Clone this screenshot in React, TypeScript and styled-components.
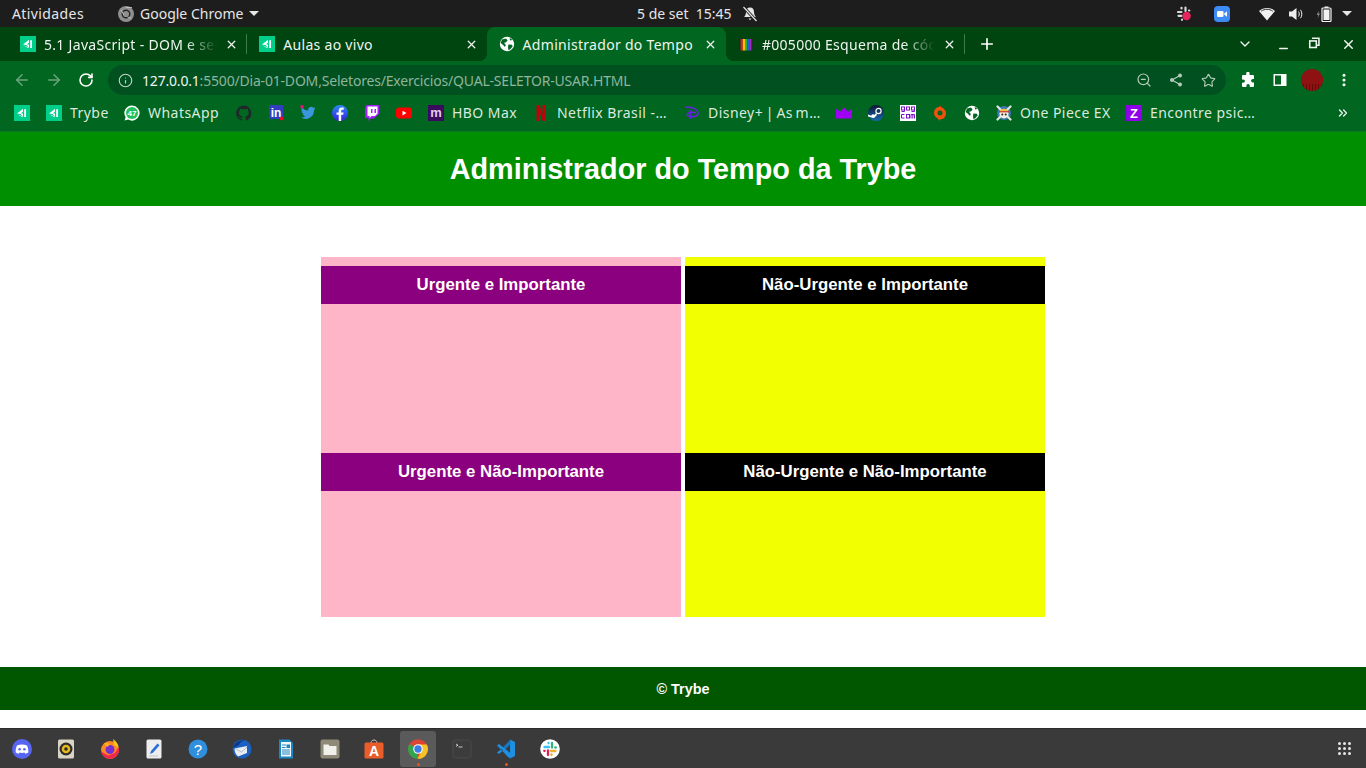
import React from "react";
import styled, { createGlobalStyle } from "styled-components";
import { ArrowLeft, ArrowRight, RotateCw, Info, ZoomOut, Star, ChevronDown, Plus, X, Minus, MoreVertical, ChevronsRight } from "lucide-react";

const UI_FONT = `"Noto Sans", "Open Sans", sans-serif`;
const PAGE_FONT = `"Liberation Sans", Arial, sans-serif`;

const GlobalStyle = createGlobalStyle`
  html, body {
    margin: 0;
    padding: 0;
    width: 1366px;
    height: 768px;
    overflow: hidden;
    background: #fff;
    font-family: ${UI_FONT};
  }
  * { box-sizing: border-box; }
`;

const Screen = styled.div`
  width: 1366px;
  height: 768px;
  display: flex;
  flex-direction: column;
`;

/* ---------- ubuntu top bar ---------- */
const SystemBar = styled.div`
  height: 27px;
  background: #1d1d1d;
  color: #e6e6e6;
  display: flex;
  align-items: center;
  font-size: 14px;
  padding-left: 12px;
`;

const BarLeft = styled.div`
  width: 625px;
  display: flex;
  align-items: center;
`;

const Activities = styled.span`
  letter-spacing: 0.4px;
`;

const BarApp = styled.div`
  margin-left: 34px;
  display: flex;
  align-items: center;
  gap: 6px;
`;

const BarClock = styled.div`
  display: flex;
  align-items: center;
  gap: 10px;
  white-space: pre;
`;

const BarTray = styled.div`
  margin-left: auto;
  padding-right: 14px;
  display: flex;
  align-items: center;
`;

const TraySlot = styled.span<{ $w: number }>`
  width: ${(p) => p.$w}px;
  display: flex;
  align-items: center;
  justify-content: flex-start;
`;

const Caret = styled.span`
  width: 0;
  height: 0;
  border-left: 5px solid transparent;
  border-right: 5px solid transparent;
  border-top: 5px solid #e6e6e6;
  display: block;
`;

/* ---------- tab strip ---------- */
const TabStrip = styled.div`
  height: 34px;
  background: #00440f;
  padding-left: 8px;
  display: flex;
  align-items: stretch;
`;

const Tab = styled.div<{ $active?: boolean; $sep?: boolean }>`
  position: relative;
  flex: 0 0 239.3px;
  min-width: 0;
  padding: 0 9px 0 12px;
  display: flex;
  align-items: center;
  gap: 8px;
  color: #eef5ef;
  font-size: 14px;
  letter-spacing: 0.3px;
  background: ${(p) => (p.$active ? "#006620" : "transparent")};
  border-radius: 8px 8px 0 0;
  ${(p) =>
    p.$active &&
    `
    &::before, &::after {
      content: "";
      position: absolute;
      bottom: 0;
      width: 8px;
      height: 8px;
    }
    &::before {
      left: -8px;
      background: radial-gradient(circle at 0 0, transparent 8px, #006620 8px);
    }
    &::after {
      right: -8px;
      background: radial-gradient(circle at 100% 0, transparent 8px, #006620 8px);
    }
  `}
  ${(p) =>
    p.$sep &&
    `
    &::after {
      content: "";
      position: absolute;
      right: 0;
      top: 7px;
      bottom: 7px;
      width: 1px;
      background: #3f7a4e;
    }
  `}
`;

const TabTitle = styled.span<{ $fade?: boolean }>`
  flex: 1;
  min-width: 0;
  white-space: nowrap;
  ${(p) =>
    p.$fade &&
    `
    -webkit-mask-image: linear-gradient(to right, #000 82%, transparent 100%);
    mask-image: linear-gradient(to right, #000 82%, transparent 100%);
  `}
`;

const NewTab = styled.div`
  width: 24px;
  margin-left: 10px;
  display: flex;
  align-items: center;
  justify-content: center;
  color: #fff;
`;

const WindowControls = styled.div`
  margin-left: auto;
  padding-right: 1px;
  display: flex;
  align-items: center;
  color: #eef5ef;
`;

const WinButton = styled.span<{ $w: number }>`
  width: ${(p) => p.$w}px;
  display: flex;
  align-items: center;
  justify-content: center;
`;

/* ---------- toolbar ---------- */
const Toolbar = styled.div`
  height: 34px;
  background: #006620;
  padding: 4px 6px 0;
  display: flex;
  align-items: center;
`;

const ToolButton = styled.span<{ $dim?: boolean }>`
  flex: 0 0 32px;
  height: 30px;
  display: flex;
  align-items: center;
  justify-content: center;
  color: ${(p) => (p.$dim ? "#6fa27f" : "#fff")};
`;

const Omnibox = styled.div`
  flex: 1;
  height: 30px;
  margin: 0 6px;
  border-radius: 15px;
  background: #005020;
  display: flex;
  align-items: center;
  padding: 0 2px 0 10px;
`;

const Url = styled.div`
  flex: 1;
  margin-left: 9px;
  font-size: 14px;
  letter-spacing: -0.19px;
  color: #8fb59b;
  white-space: nowrap;

  b {
    font-weight: 400;
    color: #f0f6f1;
  }
`;

const OmniIcon = styled.span`
  flex: 0 0 32px;
  display: flex;
  align-items: center;
  justify-content: center;
  color: #b4cdbb;
`;

const Avatar = styled.span`
  width: 22px;
  height: 22px;
  border-radius: 50%;
  background:
    repeating-linear-gradient(90deg, transparent 0 2px, rgba(50, 0, 0, 0.45) 2px 3px) 0 15px / 100% 7px no-repeat,
    #8f1212;
  display: block;
`;

/* ---------- bookmarks ---------- */
const BookmarkBar = styled.div`
  height: 37px;
  background: #006620;
  border-bottom: 1px solid #0d7a24;
  padding-left: 6px;
  display: flex;
  align-items: center;
`;

const Bookmark = styled.div`
  padding: 0 8px;
  display: flex;
  align-items: center;
  gap: 8px;
  color: #dbe9df;
  font-size: 14px;
  letter-spacing: 0.45px;
  white-space: nowrap;
`;

const BookmarkLabel = styled.span<{ $w: number; $tight?: boolean }>`
  width: ${(p) => p.$w}px;
  padding-bottom: 2px;
  word-spacing: ${(p) => (p.$tight ? "-1.5px" : "0")};
`;

const MoreBookmarks = styled.span`
  margin-left: auto;
  margin-right: 16px;
  display: flex;
  color: #e8f1ea;
`;

/* ---------- the page itself ---------- */
const PageHeader = styled.header`
  height: 74px;
  background: #008f00;
  display: flex;
  align-items: center;
  justify-content: center;
`;

const PageTitle = styled.h1`
  margin: 0;
  font: bold 28.8px ${PAGE_FONT};
  color: #fff;
`;

const Main = styled.main`
  flex: 1;
  background: #fff;
  padding-top: 51px;
  display: flex;
  justify-content: center;
`;

const Matrix = styled.section`
  display: grid;
  grid-template-columns: 360px 360px;
  grid-template-rows: 196px 164px;
  column-gap: 4px;
`;

const Quadrant = styled.article<{ $bg: string; $first?: boolean }>`
  background: ${(p) => p.$bg};
  padding-top: ${(p) => (p.$first ? 9 : 0)}px;
`;

const QuadrantTitle = styled.h2<{ $bg: string }>`
  margin: 0;
  height: 38px;
  background: ${(p) => p.$bg};
  color: #fff;
  font: bold 16.8px/37px ${PAGE_FONT};
  text-align: center;
`;

const PageFooter = styled.footer`
  height: 43px;
  background: #005700;
  color: #fff;
  font: bold 14.4px/44px ${PAGE_FONT};
  text-align: center;
`;

const FooterGap = styled.div`
  height: 18px;
  background: #fff;
`;

/* ---------- dock ---------- */
const Dock = styled.div`
  height: 40px;
  background: #3a3a3a;
  border-top: 1px solid #2c2c2c;
  display: flex;
  align-items: center;
`;

const DockItem = styled.div<{ $active?: boolean; $running?: boolean }>`
  position: relative;
  width: 44px;
  height: 36px;
  display: flex;
  align-items: center;
  justify-content: center;

  ${(p) =>
    p.$active &&
    `
    &::before {
      content: "";
      position: absolute;
      left: 4px;
      right: 4px;
      top: 0;
      bottom: 0;
      border-radius: 3px;
      background: #5a5a5a;
    }
  `}
  ${(p) =>
    p.$running &&
    `
    &::after {
      content: "";
      position: absolute;
      left: 21px;
      bottom: 1px;
      width: 3px;
      height: 3px;
      border-radius: 50%;
      background: #e9541f;
    }
  `}

  svg { position: relative; }
`;

const AppGrid = styled.div`
  margin-left: auto;
  margin-right: 15px;
  display: grid;
  grid-template-columns: repeat(3, 3px);
  gap: 2px;

  span {
    width: 3px;
    height: 3px;
    background: #e6e6e6;
    border-radius: 50%;
  }
`;

/* ---------- drawn icons ---------- */
const Ico = ({ s = 16, children }: { s?: number; children: React.ReactNode }) => (
  <svg width={s} height={s} viewBox="0 0 16 16" style={{ display: "block", flex: "none" }}>
    {children}
  </svg>
);

const TrybeIcon = () => (
  <Ico>
    <rect width="16" height="16" fill="#00cf8c" />
    <path d="M3 8.400 9 3.800v3L7 8.200l2 .5v2.700l-2.500-2.400z" fill="#fff" />
    <path d="M10.200 4.200h1.800v7.800h-1.800z" fill="#fff" />
    <path d="M3.400 9.300 8.600 12.200v-1z" fill="#fff" />
  </Ico>
);

const GlobeIcon = () => (
  <Ico>
    <circle cx="8" cy="8" r="7.200" fill="#fff" />
    <path d="M3 3.600 7 2.600 8.600 4.400 6.800 6.400 5 6.800 6.800 9 6 11 3.600 8.600 1.600 7zM9.400 8.400l3.600.4.6 1.600-2.600 3.200-1.600.4-.4-3zM10.600 1.800 13.400 4l-2.200.6z" fill="#006620" />
  </Ico>
);

const RainbowIcon = () => (
  <Ico>
    <path d="M1 2.500 3 1.400v13L1 13.600z" fill="#17301c" />
    <path d="M13 1.400 15 2.500v11l-2 1z" fill="#17301c" />
    <rect x="2.600" y="3" width="2.200" height="11.500" fill="#d6232a" />
    <rect x="4.800" y="3" width="2.200" height="11.500" fill="#f2c400" />
    <rect x="7" y="3" width="2.200" height="11.500" fill="#2fae3a" />
    <rect x="9.200" y="3" width="2.200" height="11.500" fill="#2a5fdb" />
    <rect x="11.400" y="3" width="2" height="11.500" fill="#a12bc4" />
  </Ico>
);

const ChromeMono = () => (
  <Ico>
    <circle cx="8" cy="8" r="8" fill="#8f8f8f" />
    <circle cx="8" cy="8" r="3.800" fill="none" stroke="#262626" strokeWidth="1.400" />
    <path d="M8 1.500h6M3 4l3 5M13 12 9.500 11" stroke="#cfcfcf" strokeWidth=".8" />
  </Ico>
);

const WhatsappIcon = () => (
  <Ico>
    <path d="M8 .4a7.600 7.600 0 0 0-6.400 11.700L.6 15.600l3.600-1A7.600 7.600 0 1 0 8 .4z" fill="#fff" />
    <circle cx="8" cy="8" r="6" fill="#1fc25a" />
    <text x="8" y="10.800" textAnchor="middle" fontFamily={PAGE_FONT} fontWeight="700" fontSize="8" letterSpacing="0" fill="#fff">47</text>
  </Ico>
);

const GithubIcon = () => (
  <Ico>
    <path d="M8 .4a7.800 7.800 0 0 0-2.500 15.200c.4 0 .5-.2.5-.4v-1.400c-2.200.5-2.600-1-2.600-1-.4-.9-.9-1.200-.9-1.200-.7-.5 0-.5 0-.5.8.1 1.200.8 1.200.8.700 1.200 1.900.9 2.300.7 0-.5.300-.9.500-1.100-1.700-.2-3.600-.9-3.600-3.900 0-.9.300-1.600.8-2.100-.1-.2-.4-1 .1-2.100 0 0 .700-.2 2.100.8a7.400 7.400 0 0 1 3.900 0c1.500-1 2.100-.8 2.100-.8.400 1.100.200 1.900.100 2.100.5.500.800 1.200.800 2.100 0 3-1.800 3.700-3.600 3.900.300.2.600.700.600 1.400v2.100c0 .2.100.4.500.4A7.800 7.800 0 0 0 8 .4z" fill="#20262a" />
  </Ico>
);

const LinkedinIcon = () => (
  <Ico>
    <rect x="1" y="0" width="14" height="14" fill="#2f3fc0" />
    <text x="8" y="12" textAnchor="middle" fontFamily={PAGE_FONT} fontWeight="700" fontSize="12" letterSpacing="0" fill="#fff">in</text>
    <circle cx="13.600" cy="13.600" r="2" fill="#e0102a" />
  </Ico>
);

const TwitterIcon = () => (
  <Ico>
    <path d="M15.500 3.200c-.5.300-1.100.4-1.700.5.600-.4 1.100-.9 1.300-1.600-.6.300-1.200.6-1.900.7a3 3 0 0 0-5.100 2.700A8.400 8.400 0 0 1 1.900 2.500a3 3 0 0 0 .9 4c-.5 0-.9-.1-1.300-.4 0 1.500 1 2.700 2.400 3-.4.100-.9.100-1.300 0 .4 1.200 1.500 2 2.800 2.100a6 6 0 0 1-4.400 1.200 8.400 8.400 0 0 0 13-7.500c.6-.4 1.100-.9 1.500-1.700z" fill="#3a97dd" />
    <circle cx="2" cy="1.800" r="1.800" fill="#e0157a" />
  </Ico>
);

const FacebookIcon = () => (
  <Ico>
    <defs>
      <linearGradient id="fb" x1="0" y1="0" x2="0" y2="1">
        <stop offset="0" stopColor="#2a8cf0" />
        <stop offset="1" stopColor="#3a1fe0" />
      </linearGradient>
    </defs>
    <circle cx="8" cy="8" r="8" fill="url(#fb)" />
    <path d="M9.200 16V9.800h2l.4-2.400H9.200V6c0-.8.300-1.200 1.300-1.200h1.200V2.600c-.5 0-1.200-.2-1.900-.2-2 0-3.100 1.200-3.100 3.200v1.800H4.500v2.400h2.200V16z" fill="#fff" />
  </Ico>
);

const TwitchIcon = () => (
  <Ico>
    <path d="M2.500 0 1 3v10h3.500v3L7 13.500h3L15 9V0z" fill="#a41fff" />
    <path d="M3.500 1.500h10v7l-2.500 2.500H7.500l-2 2v-2h-2z" fill="#fff" />
    <path d="M7 4h1.500v4H7zM10.500 4H12v4h-1.500z" fill="#a41fff" />
  </Ico>
);

const YoutubeIcon = () => (
  <Ico>
    <rect x="0" y="2.500" width="16" height="11" rx="3" fill="#f00" />
    <path d="M6.500 5.800v4.600L10.500 8z" fill="#fff" />
  </Ico>
);

const MaxIcon = () => (
  <Ico>
    <rect width="16" height="16" fill="#3a0a5c" />
    <text x="8" y="12" textAnchor="middle" fontFamily={PAGE_FONT} fontWeight="700" fontSize="13" letterSpacing="0" fill="#e2c9f0">m</text>
  </Ico>
);

const NetflixIcon = () => (
  <Ico>
    <path d="M3.500 0h3l3 9V0h3v16c-1 0-2-.1-3-.3L6.500 7v8.700c-1 .1-2 .2-3 .3z" fill="#b8060c" />
  </Ico>
);

const DisneyIcon = () => (
  <Ico>
    <path d="M1 2.500c5-1.200 12.500 1 13 5.500.3 3.200-5 4.500-9 3.300C2.200 10.500 2.800 8 6 7.400c2-.3 5 .1 6 .6" fill="none" stroke="#6a1ef0" strokeWidth="1.500" />
    <path d="M6 5v9" stroke="#6a1ef0" strokeWidth="1.500" />
  </Ico>
);

const CrownIcon = () => (
  <Ico>
    <path d="M0 3.500 4 6.800 8 2.500l4 4.300 4-3.300V13.500H0z" fill="#a000f5" />
  </Ico>
);

const SteamIcon = () => (
  <Ico>
    <defs>
      <linearGradient id="st" x1="0" y1="0" x2="0" y2="1">
        <stop offset="0" stopColor="#0f1730" />
        <stop offset="1" stopColor="#1568b0" />
      </linearGradient>
    </defs>
    <circle cx="8" cy="8" r="8" fill="url(#st)" />
    <circle cx="10.500" cy="6" r="2.600" fill="none" stroke="#fff" strokeWidth="1.200" />
    <path d="M0 9.500 5 11.500l3-3.500 1 2-3 3-6-1.500z" fill="#fff" />
    <circle cx="5" cy="11" r="1.800" fill="#fff" />
  </Ico>
);

const GogIcon = () => (
  <Ico>
    <rect width="16" height="16" fill="#fff" />
    <g fill="none" stroke="#7a12c8" strokeWidth="1">
      <rect x="1.500" y="2" width="3" height="3" />
      <rect x="6.500" y="2" width="3" height="3" />
      <rect x="11.500" y="2" width="3" height="3" />
      <path d="M1.500 6.500h3v-1.500M11.500 6.500h3v-1.500" />
      <path d="M4.500 9.500h-3v3.500h3" />
      <rect x="6.500" y="9.500" width="3" height="3.500" />
      <path d="M11 13.500V9.500h3.500v4M12.800 9.500v4" />
    </g>
  </Ico>
);

const OriginIcon = () => (
  <Ico>
    <path d="M8.500 0c.2 1 .2 1.500 1 2.300C12 3.500 14 5.500 14 8.300c0 3.500-2.700 6.200-6 6.200-.5.500-.8 1-1 1.500-.3-1-.2-1.500-1-2.300C3.500 12.500 2 10.500 2 7.800 2 4.500 4.700 1.800 8 1.800c.2-.6.300-1.200.5-1.800z" fill="#f2500f" />
    <circle cx="8" cy="8" r="2.500" fill="#006620" />
  </Ico>
);

const OnePieceIcon = () => (
  <Ico>
    <circle cx="8" cy="8" r="7" fill="#3a7ab0" />
    <path d="M1.500 1.500 14.500 14.500M14.500 1.500 1.500 14.500" stroke="#e4e4e4" strokeWidth="2.200" strokeLinecap="round" />
    <circle cx="8" cy="8.800" r="4.600" fill="#f4f0e0" />
    <path d="M3.200 6.800C4 2.800 12 2.800 12.800 6.800z" fill="#e8c040" />
    <path d="M3 6.800h10" stroke="#d02020" strokeWidth="1.100" />
    <circle cx="6.300" cy="9.400" r="1" fill="#222" />
    <circle cx="9.700" cy="9.400" r="1" fill="#222" />
  </Ico>
);

const ZIcon = () => (
  <Ico>
    <rect width="16" height="16" fill="#8d00e8" />
    <text x="8" y="13" textAnchor="middle" fontFamily={PAGE_FONT} fontWeight="700" fontSize="13" letterSpacing="0" fill="#fff">Z</text>
  </Ico>
);

const PuzzleIcon = () => (
  <Ico>
    <path d="M6.200 1.500a1.700 1.700 0 0 1 3.400 0V3H13a1 1 0 0 1 1 1v3h-1.200a1.700 1.700 0 0 0 0 3.400H14V14a1 1 0 0 1-1 1H9.800v-1.200a1.700 1.700 0 0 0-3.400 0V15H3a1 1 0 0 1-1-1v-3.200h1.200a1.700 1.700 0 0 0 0-3.400H2V4a1 1 0 0 1 1-1h3.200z" fill="#fff" />
  </Ico>
);

const SidePanelIcon = () => (
  <Ico>
    <rect x="1.500" y="2" width="13" height="12" fill="#fff" />
    <rect x="3" y="3.500" width="6" height="9" fill="#006620" />
  </Ico>
);

const ShareIcon = () => (
  <Ico>
    <path d="M12 3.500 4 8l8 4.500" fill="none" stroke="#b4cdbb" strokeWidth="1.300" />
    <circle cx="12" cy="3.500" r="2" fill="#b4cdbb" />
    <circle cx="4" cy="8" r="2" fill="#b4cdbb" />
    <circle cx="12" cy="12.500" r="2" fill="#b4cdbb" />
  </Ico>
);

const BellOffIcon = () => (
  <Ico>
    <path d="M8 1.500c-2.800 0-4 2-4 4.500 0 2.500-1 4-2 5h12c-1-1-2-2.500-2-5 0-2.500-1.200-4.500-4-4.500z" fill="#e6e6e6" />
    <path d="M6.500 12.500h3L8 14.200z" fill="#e6e6e6" />
    <path d="M1.500 1 14.500 15" stroke="#1d1d1d" strokeWidth="3" />
    <path d="M1.500 1 14.500 15" stroke="#e6e6e6" strokeWidth="1.200" />
  </Ico>
);

const SlackTray = () => (
  <Ico>
    <g stroke="#d9d9d9" strokeWidth="2.200" strokeLinecap="round">
      <path d="M2 6h3.500M5.500 1.800v.6M9.500 1.500v3.500M13 4.500h.3M5.500 9.800H2.500M6 13.500v.3" />
    </g>
    <circle cx="10.600" cy="10" r="4.200" fill="#e8245f" />
  </Ico>
);

const ZoomTray = () => (
  <Ico>
    <rect width="16" height="16" rx="4" fill="#3d8bf5" />
    <rect x="3" y="5" width="6.500" height="6" rx="1.200" fill="#fff" />
    <path d="M10.200 7.400 13 5.300v5.400L10.200 8.600z" fill="#fff" />
  </Ico>
);

const WifiTray = () => (
  <Ico>
    <path d="M0 5c4.500-4 11.500-4 16 0l-8 9.500z" fill="#f2f2f2" />
    <path d="M2.200 5.200c3.400-2.500 8.200-2.500 11.600 0" fill="none" stroke="#1d1d1d" strokeWidth=".9" />
  </Ico>
);

const SpeakerTray = () => (
  <Ico>
    <path d="M1 5.500h3L8.500 2v12L4 10.500H1z" fill="#ececec" />
    <path d="M10.500 5.500c1 1.500 1 3.500 0 5M12.500 3.800c1.800 2.500 1.800 6 0 8.400" stroke="#ececec" strokeWidth="1" fill="none" />
  </Ico>
);

const BatteryTray = () => (
  <Ico>
    <path d="M2.500 4.500 0.800 9h1.500L1.500 12.500 4 7.500H2.500z" fill="#8a8a8a" />
    <rect x="6" y="2" width="9" height="13.500" rx="1" fill="none" stroke="#f2f2f2" strokeWidth="1.200" />
    <rect x="8.500" y="0.500" width="4" height="1.500" fill="#f2f2f2" />
    <rect x="7.500" y="3.500" width="6" height="10.500" fill="#f2f2f2" />
  </Ico>
);

const RestoreIcon = () => (
  <Ico s={14}>
    <path d="M4.500 1.500h8v8h-2.500" fill="none" stroke="#eef5ef" strokeWidth="1.800" />
    <rect x="2" y="4.500" width="7.500" height="7.500" fill="none" stroke="#eef5ef" strokeWidth="1.800" />
  </Ico>
);

/* dock apps */
const Dk = ({ children }: { children: React.ReactNode }) => (
  <svg width="20" height="20" viewBox="0 0 20 20" style={{ display: "block" }}>
    {children}
  </svg>
);

const DiscordApp = () => (
  <Dk>
    <circle cx="10" cy="10" r="10" fill="#5865f2" />
    <path d="M5 6.500c3-1.500 7-1.500 10 0 1 2 1.500 4.500 1.300 7-1 .7-2 1.100-3 1.300l-.8-1.300c-1.600.5-3.400.5-5 0l-.8 1.300c-1-.2-2-.6-3-1.300-.2-2.500.3-5 1.300-7z" fill="#fff" />
    <circle cx="7.600" cy="10.300" r="1.300" fill="#5865f2" />
    <circle cx="12.400" cy="10.300" r="1.300" fill="#5865f2" />
  </Dk>
);

const RhythmboxApp = () => (
  <Dk>
    <rect x="2" y="0.500" width="16" height="19" rx="1.500" fill="#d9d4c4" />
    <circle cx="10" cy="10" r="6.500" fill="#2b2b2b" />
    <circle cx="10" cy="10" r="4.300" fill="#e8b820" />
    <circle cx="10" cy="10" r="1.800" fill="#2b2b2b" />
  </Dk>
);

const FirefoxApp = () => (
  <Dk>
    <circle cx="10" cy="11" r="9" fill="#ff8a1f" />
    <path d="M1 11a9 9 0 0 0 18 0c0-1-.2-2-.5-2.800L15 14l-7 2.500L2 13z" fill="#f0264f" />
    <path d="M13 0c3 2 5.500 5 5.500 8.500L14 6z" fill="#ffc21f" />
    <circle cx="10" cy="10.500" r="4.500" fill="#7a2fd0" />
    <path d="M4 4c2 0 4-.5 6 1.500L7 8z" fill="#ffb01f" />
  </Dk>
);

const EditorApp = () => (
  <Dk>
    <rect x="2.500" y="0.500" width="15" height="19" rx="1.500" fill="#eeeeee" />
    <path d="M6 15 7 12 13.500 4.500 15.500 6.200 9 13.800z" fill="#2a6fd8" />
    <path d="M5 17h9" stroke="#c5c5c5" strokeWidth="1" />
  </Dk>
);

const HelpApp = () => (
  <Dk>
    <circle cx="10" cy="10" r="9.500" fill="#2f8fdc" />
    <text x="10" y="15.500" textAnchor="middle" fontFamily={PAGE_FONT} fontSize="15" fill="#fff">?</text>
  </Dk>
);

const ThunderbirdApp = () => (
  <Dk>
    <circle cx="10" cy="10" r="9.500" fill="#1b5fc0" />
    <path d="M1 9c1-5 6-8.500 12-8 -3 1-5 2.500-6 5z" fill="#0b3a8c" />
    <path d="M2.500 9.500 15 7v7l-9 3.500C3.500 15.500 2.500 12.500 2.500 9.500z" fill="#e8edf2" />
    <path d="M4 10 9.500 13 15 8" stroke="#9fb0c0" strokeWidth=".8" fill="none" />
  </Dk>
);

const WriterApp = () => (
  <Dk>
    <path d="M3 .5h10.500L17 4v15.500H3z" fill="#1c87c5" />
    <rect x="5" y="3" width="10" height="14.500" fill="#f4f8fb" />
    <path d="M6 6h4M6 8.500h3.500M6 11h8M6 13h8M6 15h8" stroke="#1c87c5" strokeWidth="1" />
    <rect x="10.500" y="5.500" width="3.500" height="3.500" fill="#1c87c5" />
  </Dk>
);

const FilesApp = () => (
  <Dk>
    <rect x="0.500" y="0.500" width="19" height="19" rx="2" fill="#8f8a78" />
    <path d="M3.500 5.500h5l1 1.500h7v9h-13z" fill="#f2f0ea" />
  </Dk>
);

const StoreApp = () => (
  <Dk>
    <path d="M7 4c0-4 6-4 6 0" fill="none" stroke="#c9c1b8" strokeWidth="1" />
    <rect x="0.500" y="3.500" width="19" height="16" rx="1.500" fill="#e95d2a" />
    <text x="10" y="17" textAnchor="middle" fontFamily={PAGE_FONT} fontWeight="700" fontSize="14" fill="#fff">A</text>
  </Dk>
);

const ChromeApp = () => (
  <Dk>
    <circle cx="10" cy="10" r="9.800" fill="#dd4438" />
    <path d="M10 10 1.400 5a9.800 9.800 0 0 0 8 14.800z" fill="#2fa64a" />
    <path d="M10 5.500h8.800A9.800 9.800 0 0 1 9.400 19.800L14 11z" fill="#f6c226" />
    <circle cx="10" cy="10" r="4.800" fill="#fff" />
    <circle cx="10" cy="10" r="3.700" fill="#3d7be6" />
  </Dk>
);

const TerminalApp = () => (
  <Dk>
    <rect x="1" y="1" width="18" height="18" rx="2.500" fill="#3c3c3c" stroke="#555" strokeWidth=".6" />
    <path d="M4 5l2 1.200L4 7.400" stroke="#e8e8e8" strokeWidth=".8" fill="none" />
    <path d="M6.500 8h4" stroke="#e8e8e8" strokeWidth=".8" />
  </Dk>
);

const VscodeApp = () => (
  <Dk>
    <path d="M14 0.500 19 3v14l-5 2.500z" fill="#1f8fe0" />
    <path d="M14.500 0.500 5.500 10l9 9.500v-5L9.500 10l5-4.500z" fill="#1679c6" />
    <path d="M1 6.500 3 5l12 9.500v5l-3-1.500zM1 13.500 3 15 7 11.500 5.500 10z" fill="#1e8ee0" />
  </Dk>
);

const SlackApp = () => (
  <Dk>
    <circle cx="10" cy="10" r="9.800" fill="#fff" />
    <g strokeWidth="2.300" strokeLinecap="round">
      <path d="M4.500 8h4.500" stroke="#36c5f0" />
      <path d="M8.500 3.800v.5" stroke="#36c5f0" />
      <path d="M12 4v4.500" stroke="#2eb67d" />
      <path d="M15.800 8.500h-.5" stroke="#2eb67d" />
      <path d="M15.500 12H11" stroke="#ecb22e" />
      <path d="M11.500 16v-.5" stroke="#ecb22e" />
      <path d="M8 16v-4.500" stroke="#e01e5a" />
      <path d="M4.200 11.800h.5" stroke="#e01e5a" />
    </g>
  </Dk>
);

/* ---------- data ---------- */
const bookmarks: { icon: React.ReactNode; label?: string; w?: number; tight?: boolean }[] = [
  { icon: <TrybeIcon /> },
  { icon: <TrybeIcon />, label: "Trybe", w: 38 },
  { icon: <WhatsappIcon />, label: "WhatsApp", w: 72 },
  { icon: <GithubIcon /> },
  { icon: <LinkedinIcon /> },
  { icon: <TwitterIcon /> },
  { icon: <FacebookIcon /> },
  { icon: <TwitchIcon /> },
  { icon: <YoutubeIcon /> },
  { icon: <MaxIcon />, label: "HBO Max", w: 65 },
  { icon: <NetflixIcon />, label: "Netflix Brasil -…", w: 111 },
  { icon: <DisneyIcon />, label: "Disney+ | As m…", w: 112, tight: true },
  { icon: <CrownIcon /> },
  { icon: <SteamIcon /> },
  { icon: <GogIcon /> },
  { icon: <OriginIcon /> },
  { icon: <GlobeIcon /> },
  { icon: <OnePieceIcon />, label: "One Piece EX", w: 90 },
  { icon: <ZIcon />, label: "Encontre psic…", w: 108 },
];

const dockApps: { icon: React.ReactNode; active?: boolean; running?: boolean }[] = [
  { icon: <DiscordApp /> },
  { icon: <RhythmboxApp /> },
  { icon: <FirefoxApp /> },
  { icon: <EditorApp /> },
  { icon: <HelpApp /> },
  { icon: <ThunderbirdApp /> },
  { icon: <WriterApp /> },
  { icon: <FilesApp /> },
  { icon: <StoreApp /> },
  { icon: <ChromeApp />, active: true, running: true },
  { icon: <TerminalApp /> },
  { icon: <VscodeApp />, running: true },
  { icon: <SlackApp /> },
];

export default function App() {
  return (
    <>
      <GlobalStyle />
      <Screen>
        <SystemBar>
          <BarLeft>
            <Activities>Atividades</Activities>
            <BarApp>
              <ChromeMono />
              <span>Google Chrome</span>
              <Caret />
            </BarApp>
          </BarLeft>
          <BarClock>
            <span>5 de set  15:45</span>
            <BellOffIcon />
          </BarClock>
          <BarTray>
            <TraySlot $w={38}><SlackTray /></TraySlot>
            <TraySlot $w={45}><ZoomTray /></TraySlot>
            <TraySlot $w={29}><WifiTray /></TraySlot>
            <TraySlot $w={28}><SpeakerTray /></TraySlot>
            <TraySlot $w={26}><BatteryTray /></TraySlot>
            <Caret />
          </BarTray>
        </SystemBar>

        <TabStrip>
          <Tab $sep>
            <TrybeIcon />
            <TabTitle $fade>5.1 JavaScript - DOM e sel</TabTitle>
            <X size={13} strokeWidth={2.4} />
          </Tab>
          <Tab>
            <TrybeIcon />
            <TabTitle>Aulas ao vivo</TabTitle>
            <X size={13} strokeWidth={2.4} />
          </Tab>
          <Tab $active>
            <GlobeIcon />
            <TabTitle>Administrador do Tempo</TabTitle>
            <X size={13} strokeWidth={2.4} />
          </Tab>
          <Tab $sep>
            <RainbowIcon />
            <TabTitle $fade>#005000 Esquema de cód</TabTitle>
            <X size={13} strokeWidth={2.4} />
          </Tab>
          <NewTab><Plus size={18} strokeWidth={2.2} /></NewTab>
          <WindowControls>
            <WinButton $w={44}><ChevronDown size={16} strokeWidth={2} /></WinButton>
            <WinButton $w={32}><Minus size={13} strokeWidth={2.6} style={{ marginTop: 8 }} /></WinButton>
            <WinButton $w={32}><RestoreIcon /></WinButton>
            <WinButton $w={34}><X size={15} strokeWidth={2.4} /></WinButton>
          </WindowControls>
        </TabStrip>

        <Toolbar>
          <ToolButton $dim><ArrowLeft size={18} strokeWidth={2} /></ToolButton>
          <ToolButton $dim><ArrowRight size={18} strokeWidth={2} /></ToolButton>
          <ToolButton><RotateCw size={16} strokeWidth={2.4} /></ToolButton>
          <Omnibox>
            <Info size={15} color="#c3d6c9" strokeWidth={1.8} />
            <Url><b>127.0.0.1</b>:5500/Dia-01-DOM,Seletores/Exercicios/QUAL-SELETOR-USAR.HTML</Url>
            <OmniIcon><ZoomOut size={16} strokeWidth={1.8} /></OmniIcon>
            <OmniIcon><ShareIcon /></OmniIcon>
            <OmniIcon><Star size={15} strokeWidth={1.8} /></OmniIcon>
          </Omnibox>
          <ToolButton><PuzzleIcon /></ToolButton>
          <ToolButton><SidePanelIcon /></ToolButton>
          <ToolButton><Avatar /></ToolButton>
          <ToolButton><MoreVertical size={16} strokeWidth={2.6} /></ToolButton>
        </Toolbar>

        <BookmarkBar>
          {bookmarks.map((b, i) => (
            <Bookmark key={i}>
              {b.icon}
              {b.label && <BookmarkLabel $w={b.w as number} $tight={b.tight}>{b.label}</BookmarkLabel>}
            </Bookmark>
          ))}
          <MoreBookmarks><ChevronsRight size={14} strokeWidth={2.4} /></MoreBookmarks>
        </BookmarkBar>

        <PageHeader>
          <PageTitle>Administrador do Tempo da Trybe</PageTitle>
        </PageHeader>

        <Main>
          <Matrix>
            <Quadrant $bg="#ffb5c8" $first>
              <QuadrantTitle $bg="#8b007e">Urgente e Importante</QuadrantTitle>
            </Quadrant>
            <Quadrant $bg="#f2ff00" $first>
              <QuadrantTitle $bg="#000">Não-Urgente e Importante</QuadrantTitle>
            </Quadrant>
            <Quadrant $bg="#ffb5c8">
              <QuadrantTitle $bg="#8b007e">Urgente e Não-Importante</QuadrantTitle>
            </Quadrant>
            <Quadrant $bg="#f2ff00">
              <QuadrantTitle $bg="#000">Não-Urgente e Não-Importante</QuadrantTitle>
            </Quadrant>
          </Matrix>
        </Main>

        <PageFooter>© Trybe</PageFooter>
        <FooterGap />

        <Dock>
          {dockApps.map((a, i) => (
            <DockItem key={i} $active={a.active} $running={a.running}>
              {a.icon}
            </DockItem>
          ))}
          <AppGrid>
            {Array.from({ length: 9 }).map((_, i) => (
              <span key={i} />
            ))}
          </AppGrid>
        </Dock>
      </Screen>
    </>
  );
}
